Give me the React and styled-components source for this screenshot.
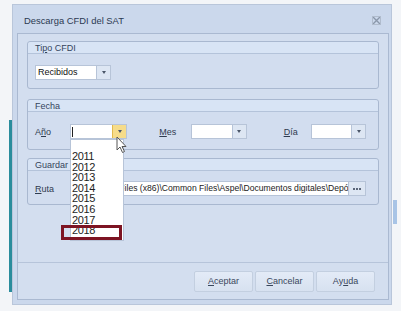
import React from 'react'
import styled, { createGlobalStyle } from 'styled-components'

const Global = createGlobalStyle`
  body {
    margin: 0;
    background: #f3f5f8;
    font-family: "Liberation Sans", Arial, sans-serif;
  }
`

const Page = styled.div`
  position: relative;
  width: 401px;
  height: 311px;
  overflow: hidden;
  padding: 4px 0 0 12px;
  box-sizing: border-box;
  &::before {
    content: '';
    position: absolute;
    left: 9px;
    top: 120px;
    width: 3px;
    height: 172px;
    background: #2a8c9c;
  }
  &::after {
    content: '';
    position: absolute;
    left: 393px;
    top: 200px;
    width: 4px;
    height: 24px;
    background: #a8c4e6;
  }
`

const Window = styled.div`
  position: relative;
  width: 380px;
  height: 301px;
  box-sizing: border-box;
  background: #cbd8ec;
  border: 1px solid #b9c6da;
  display: flex;
  flex-direction: column;
  z-index: 1;
`

const TitleBar = styled.div`
  height: 28px;
  display: flex;
  align-items: center;
  justify-content: space-between;
  padding: 2px 10px 0 11px;
  box-sizing: border-box;
  font-size: 9.4px;
  color: #2c3a52;
`

const Close = styled.div`
  width: 9px;
  height: 9px;
  display: flex;
`

const Body = styled.div`
  flex: 1;
  margin: 0 2px 4px 4px;
  background: #d3deef;
  border: 1px solid #aab9d1;
  display: flex;
  flex-direction: column;
  padding: 7px 9px 0 9px;
`

const Group = styled.div`
  height: ${p => p.h}px;
  margin-bottom: ${p => p.mb}px;
  border: 1px solid #a9b8d0;
  border-radius: 3px;
  box-sizing: border-box;
  background: #d2ddef;
  display: flex;
  flex-direction: column;
`

const GroupHead = styled.div`
  height: 11px;
  padding-left: 7px;
  background: #d8e4f5;
  border-bottom: 1px solid #b4c3da;
  font-size: 9px;
  line-height: 12px;
  color: #35445c;
  border-radius: 3px 3px 0 0;
`

const Row = styled.div`
  flex: 1;
  display: flex;
  align-items: center;
  padding: 0 12px 0 7px;
  padding-top: ${p => p.pt || 0}px;
`

const Label = styled.span`
  width: ${p => p.w}px;
  font-size: 9px;
  color: #2f3b4f;
  u { text-decoration: underline; }
`

const Combo = styled.div`
  width: ${p => p.w}px;
  height: 15px;
  display: flex;
  box-sizing: border-box;
  border: 1px solid #b7c4d8;
  background: #fff;
  margin-right: ${p => p.mr || 0}px;
`

const ComboText = styled.div`
  flex: 1;
  font-size: 9px;
  line-height: 13px;
  padding-left: 2px;
  color: #111;
  overflow: hidden;
  white-space: nowrap;
`

const Caret = styled.div`
  width: 1px;
  height: 10px;
  margin: 2px 0 0 1px;
  background: #222;
`

const Arrow = styled.div`
  width: 13px;
  background: ${p => (p.hot ? '#f6dc8a' : '#dde6f3')};
  border-left: 1px solid ${p => (p.hot ? '#e2b94e' : '#b7c4d8')};
  display: flex;
  align-items: center;
  justify-content: center;
  &::after {
    content: '';
    border-left: 2.5px solid transparent;
    border-right: 2.5px solid transparent;
    border-top: 3px solid #4a5568;
  }
`

const PathField = styled.div`
  flex: 1;
  height: 15px;
  display: flex;
  box-sizing: border-box;
  border: 1px solid #b7c4d8;
  background: #fff;
  font-size: 8.6px;
  line-height: 13px;
  color: #222;
  overflow: hidden;
  white-space: nowrap;
`

const PathText = styled.div`
  flex: 1;
  overflow: hidden;
  padding-left: 2px;
`

const Dots = styled.div`
  width: 16px;
  background: #dde6f3;
  border-left: 1px solid #b7c4d8;
  display: flex;
  align-items: center;
  justify-content: center;
  gap: 1px;
`

const Dot = styled.span`
  width: 2px;
  height: 2px;
  background: #5a6578;
`

const Footer = styled.div`
  margin: auto -9px 0;
  border-top: 1px solid #b6c4da;
  height: 37px;
  box-sizing: border-box;
  display: flex;
  justify-content: flex-end;
  align-items: flex-start;
  padding: 8px 13px 0 0;
  gap: 2px;
`

const Button = styled.div`
  width: 59px;
  height: 21px;
  box-sizing: border-box;
  border: 1px solid #c3cfe0;
  border-radius: 2px;
  background: linear-gradient(#e3ebf7, #d7e1f0);
  font-size: 9px;
  line-height: 19px;
  text-align: center;
  color: #3a475c;
  u { text-decoration: underline; }
`

const List = styled.div`
  position: absolute;
  left: 70px;
  top: 139px;
  width: 54px;
  height: 102px;
  box-sizing: border-box;
  background: #fff;
  border: 1px solid #b7c4d8;
  padding: 11px 0 0 1px;
  z-index: 2;
`

const Item = styled.div`
  font-size: 11px;
  line-height: 10.6px;
  color: #1e1e1e;
  letter-spacing: -0.4px;
`

const Mark = styled.div`
  position: absolute;
  left: 61px;
  top: 225px;
  width: 61px;
  height: 15px;
  box-sizing: border-box;
  border: 3px solid #7d1423;
  z-index: 3;
`

const Cursor = styled.svg`
  position: absolute;
  left: 116px;
  top: 136px;
  z-index: 4;
`

const years = ['2011', '2012', '2013', '2014', '2015', '2016', '2017', '2018']

export default function App() {
  return (
    <Page>
      <Global />
      <Window>
        <TitleBar>
          <span>Descarga CFDI del SAT</span>
          <Close>
            <svg width="9" height="9" viewBox="0 0 9 9">
              <path d="M1 1L8 8M8 1L1 8" stroke="#8a97aa" strokeWidth="1.4" />
              <rect x="0.5" y="0.5" width="8" height="8" fill="none" stroke="#b0bccd" />
            </svg>
          </Close>
        </TitleBar>
        <Body>
          <Group h={48} mb={10}>
            <GroupHead>Ti<u>p</u>o CFDI</GroupHead>
            <Row pt={2}>
              <Combo w={76}>
                <ComboText>Recibidos</ComboText>
                <Arrow />
              </Combo>
            </Row>
          </Group>
          <Group h={51} mb={8}>
            <GroupHead>Fecha</GroupHead>
            <Row pt={2}>
              <Label w={35}>A<u>ñ</u>o</Label>
              <Combo w={58} mr={32}>
                <Caret />
                <ComboText />
                <Arrow hot />
              </Combo>
              <Label w={32}><u>M</u>es</Label>
              <Combo w={56} mr={37}>
                <ComboText />
                <Arrow />
              </Combo>
              <Label w={28}><u>D</u>ía</Label>
              <Combo w={55}>
                <ComboText />
                <Arrow />
              </Combo>
            </Row>
          </Group>
          <Group h={47} mb={0}>
            <GroupHead>Guardar en</GroupHead>
            <Row pt={2}>
              <Label w={35}><u>R</u>uta</Label>
              <PathField>
                <PathText>C:\Program Files (x86)\Common Files\Aspel\Documentos digitales\Depósito</PathText>
                <Dots><Dot /><Dot /><Dot /></Dots>
              </PathField>
            </Row>
          </Group>
          <Footer>
            <Button><u>A</u>ceptar</Button>
            <Button><u>C</u>ancelar</Button>
            <Button>Ay<u>u</u>da</Button>
          </Footer>
        </Body>
      </Window>
      <List>
        {years.map(y => (
          <Item key={y}>{y}</Item>
        ))}
      </List>
      <Mark />
      <Cursor width="12" height="18" viewBox="0 0 12 18">
        <path d="M1 1L1 14L4 11L6.5 16.5L8.5 15.5L6 10.5L10 10.5Z" fill="#fff" stroke="#555" strokeWidth="1" />
      </Cursor>
    </Page>
  )
}
